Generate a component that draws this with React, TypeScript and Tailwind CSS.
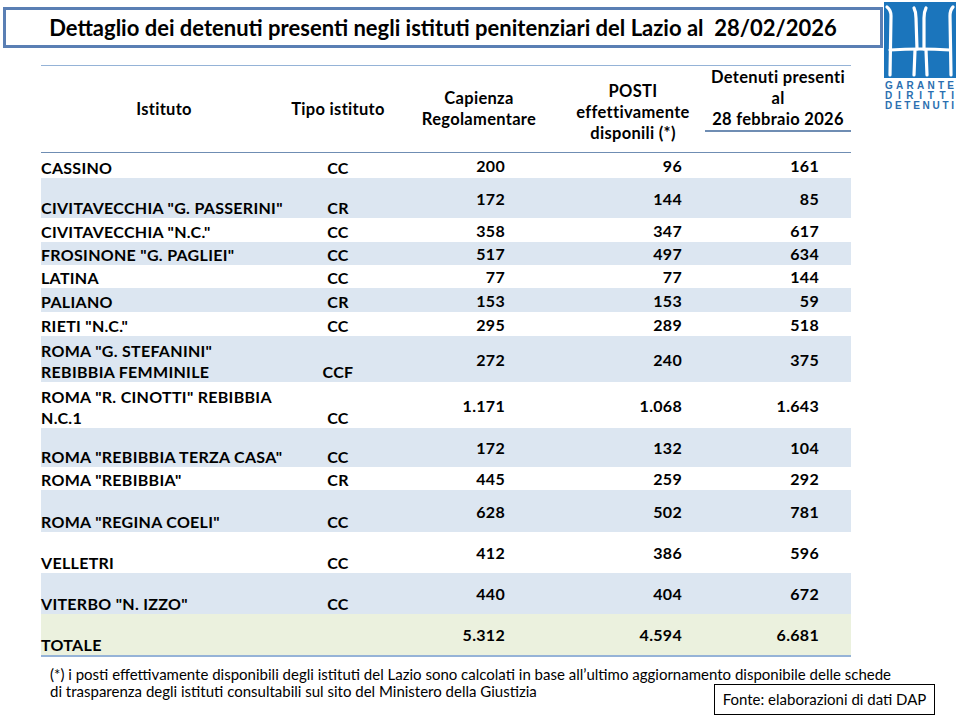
const rows = [
  { name: "CASSINO", tipo: "CC", cap: "200", posti: "96", det: "161", h: "h-[25px]", bg: "bg-white" },
  { name: 'CIVITAVECCHIA "G. PASSERINI"', tipo: "CR", cap: "172", posti: "144", det: "85", h: "h-[40px]", bg: "bg-[#dce6f1]" },
  { name: 'CIVITAVECCHIA "N.C."', tipo: "CC", cap: "358", posti: "347", det: "617", h: "h-[24px]", bg: "bg-white" },
  { name: 'FROSINONE "G. PAGLIEI"', tipo: "CC", cap: "517", posti: "497", det: "634", h: "h-[23px]", bg: "bg-[#dce6f1]" },
  { name: "LATINA", tipo: "CC", cap: "77", posti: "77", det: "144", h: "h-[23px]", bg: "bg-white" },
  { name: "PALIANO", tipo: "CR", cap: "153", posti: "153", det: "59", h: "h-[24px]", bg: "bg-[#dce6f1]" },
  { name: 'RIETI "N.C."', tipo: "CC", cap: "295", posti: "289", det: "518", h: "h-[24px]", bg: "bg-white" },
  { name: 'ROMA "G. STEFANINI"\nREBIBBIA FEMMINILE', tipo: "CCF", cap: "272", posti: "240", det: "375", h: "h-[46px]", bg: "bg-[#dce6f1]" },
  { name: 'ROMA "R. CINOTTI" REBIBBIA\nN.C.1', tipo: "CC", cap: "1.171", posti: "1.068", det: "1.643", h: "h-[46px]", bg: "bg-white" },
  { name: 'ROMA "REBIBBIA TERZA CASA"', tipo: "CC", cap: "172", posti: "132", det: "104", h: "h-[39px]", bg: "bg-[#dce6f1]" },
  { name: 'ROMA "REBIBBIA"', tipo: "CR", cap: "445", posti: "259", det: "292", h: "h-[23px]", bg: "bg-white" },
  { name: 'ROMA "REGINA COELI"', tipo: "CC", cap: "628", posti: "502", det: "781", h: "h-[42px]", bg: "bg-[#dce6f1]" },
  { name: "VELLETRI", tipo: "CC", cap: "412", posti: "386", det: "596", h: "h-[41px]", bg: "bg-white" },
  { name: 'VITERBO "N. IZZO"', tipo: "CC", cap: "440", posti: "404", det: "672", h: "h-[41px]", bg: "bg-[#dce6f1]" },
  { name: "TOTALE", tipo: "", cap: "5.312", posti: "4.594", det: "6.681", h: "h-[41px]", bg: "bg-[#ebf1de]" },
];

const cols = "grid grid-cols-[246px_102px_186px_130px_146px]";

const Logo = () => (
  <div className="flex w-[72px] flex-col">
    <svg width="72" height="76" viewBox="0 0 72 76">
      <rect x="0" y="0" width="72" height="76" fill="#1b75bc" />
      <g fill="none" stroke="#fff" strokeWidth="3.2" strokeLinecap="round">
        <path d="M3 5 Q7 8 7 14 L6 73" />
        <path d="M69 5 Q66 8 66 14 L67 73" />
        <path d="M30 6 Q32 10 32 16 L33 47" />
        <path d="M42 6 Q40 10 40 16 L40 47" />
        <path d="M6 48 Q36 46 66 48" />
        <path d="M31 48 L30 73" />
        <path d="M42 48 L43 73" />
      </g>
    </svg>
    <div className="mt-[3px] w-[70px] pl-[1px] font-['Liberation_Sans',sans-serif] text-[10px] font-bold leading-[10px] text-[#2a6fb0]">
      <div className="flex justify-between"><span>G</span><span>A</span><span>R</span><span>A</span><span>N</span><span>T</span><span>E</span></div>
      <div className="flex justify-between"><span>D</span><span>I</span><span>R</span><span>I</span><span>T</span><span>T</span><span>I</span></div>
      <div className="flex justify-between"><span>D</span><span>E</span><span>T</span><span>E</span><span>N</span><span>U</span><span>T</span><span>I</span></div>
    </div>
  </div>
);

export default function App() {
  return (
    <div className="relative h-[720px] w-[960px] overflow-hidden bg-white font-['Lato',sans-serif] text-black">
      {/* title */}
      <div className="flex h-[65px] items-start">
        <div className="ml-[3px] mt-[7px] flex h-[41px] w-[880px] items-center justify-center border-[3px] border-[#5a7fb4]">
          <span className="text-[22px] font-bold">
            Dettaglio dei detenuti presenti negli istituti penitenziari del Lazio al&nbsp;&nbsp;28/02/2026
          </span>
        </div>
        <div className="ml-[1px] mt-[2px]">
          <Logo />
        </div>
      </div>

      {/* table */}
      <div className="ml-[41px] w-[810px] text-[16px] font-bold tracking-[0.3px]">
        <div className={`${cols} h-[88px] border-y border-t-[#95b3d7] border-b-[#6f8db3] text-[16.5px] leading-[21px]`}>
          <div className="flex items-center justify-center">Istituto</div>
          <div className="flex items-center justify-center">Tipo istituto</div>
          <div className="flex flex-col items-center justify-center pr-[6px] text-center">
            <span>Capienza</span>
            <span>Regolamentare</span>
          </div>
          <div className="flex flex-col items-center justify-center pr-[14px] pt-[6px] text-center">
            <span>POSTI</span>
            <span>effettivamente</span>
            <span>disponili (*)</span>
          </div>
          <div className="flex flex-col items-center pt-[1px] text-center">
            <span>Detenuti presenti</span>
            <span>al</span>
            <span className="w-full border-b-2 border-[#6f8db3]">28 febbraio 2026</span>
          </div>
        </div>
        {rows.map((r) => (
          <div key={r.name} className={`${cols} ${r.h} ${r.bg} leading-[21px]`}>
            <div className="flex items-end whitespace-pre-line">{r.name}</div>
            <div className="flex items-end justify-center">{r.tipo}</div>
            <div className="flex items-center justify-end pr-[70px]">{r.cap}</div>
            <div className="flex items-center justify-end pr-[23px]">{r.posti}</div>
            <div className="flex items-center justify-end pr-[32px]">{r.det}</div>
          </div>
        ))}
        <div className="h-[2px] bg-[#95b3d7]" />
      </div>

      {/* note */}
      <div className="ml-[50px] mt-[9px] text-[15px] leading-[17px]">
        <p>
          (*) i posti effettivamente disponibili degli istituti del Lazio sono calcolati in base all’ultimo aggiornamento disponibile delle schede
        </p>
        <p>di trasparenza degli istituti consultabili sul sito del Ministero della Giustizia</p>
      </div>

      <div className="absolute left-[714px] top-[684px] flex h-[31px] w-[221px] items-center justify-center border border-black bg-white text-[15px]">
        Fonte: elaborazioni di dati DAP
      </div>
    </div>
  );
}
